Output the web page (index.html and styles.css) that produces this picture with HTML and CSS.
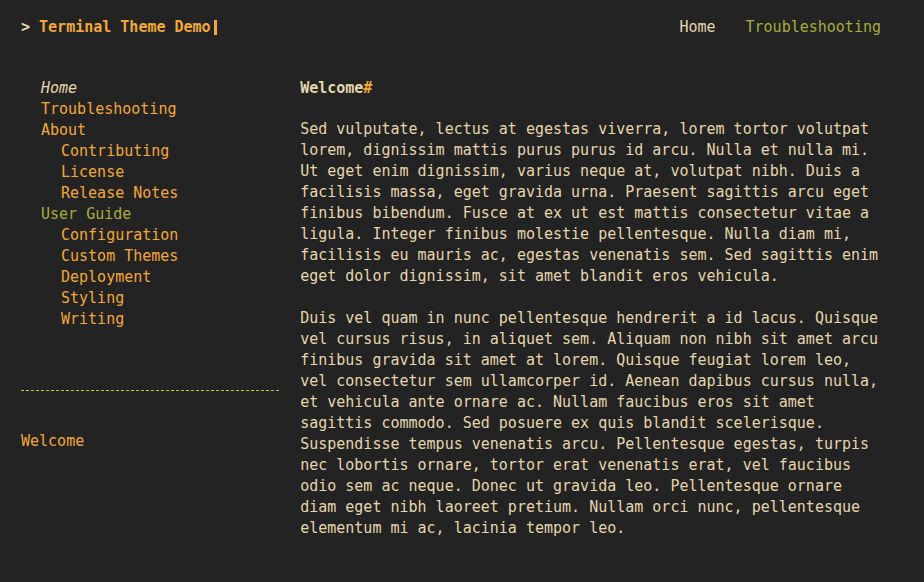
FILE: index.html
```html
<!DOCTYPE html>
<html lang="en">
<head>
<meta charset="utf-8">
<title>Terminal Theme Demo</title>
<link rel="stylesheet" href="styles.css">
</head>
<body>
<div class="container">
  <header class="top-nav">
    <div class="logo"><span class="prompt">&gt; </span><span class="logo-text">Terminal Theme Demo</span><span class="cursor"></span></div>
    <nav class="menu">
      <a class="menu-item menu-home" href="#">Home</a>
      <a class="menu-item menu-active" href="#">Troubleshooting</a>
    </nav>
  </header>
  <div class="main-grid">
    <aside class="sidebar">
      <ul class="side-nav">
        <li class="nav-current">Home</li>
        <li><a href="#">Troubleshooting</a></li>
        <li><a href="#">About</a>
          <ul class="sub-nav">
            <li><a href="#">Contributing</a></li>
            <li><a href="#">License</a></li>
            <li><a href="#">Release Notes</a></li>
          </ul>
        </li>
        <li><span class="nav-section">User Guide</span>
          <ul class="sub-nav">
            <li><a href="#">Configuration</a></li>
            <li><a href="#">Custom Themes</a></li>
            <li><a href="#">Deployment</a></li>
            <li><a href="#">Styling</a></li>
            <li><a href="#">Writing</a></li>
          </ul>
        </li>
      </ul>
      <hr class="divider">
      <ul class="toc">
        <li><a href="#">Welcome</a></li>
      </ul>
    </aside>
    <main class="content">
      <h1 class="title">Welcome<a class="anchor" href="#">#</a></h1>
      <p class="para">Sed vulputate, lectus at egestas viverra, lorem tortor volutpat lorem, dignissim mattis purus purus id arcu. Nulla et nulla mi. Ut eget enim dignissim, varius neque at, volutpat nibh. Duis a facilisis massa, eget gravida urna. Praesent sagittis arcu eget finibus bibendum. Fusce at ex ut est mattis consectetur vitae a ligula. Integer finibus molestie pellentesque. Nulla diam mi, facilisis eu mauris ac, egestas venenatis sem. Sed sagittis enim eget dolor dignissim, sit amet blandit eros vehicula.</p>
      <p class="para">Duis vel quam in nunc pellentesque hendrerit a id lacus. Quisque vel cursus risus, in aliquet sem. Aliquam non nibh sit amet arcu finibus gravida sit amet at lorem. Quisque feugiat lorem leo, vel consectetur sem ullamcorper id. Aenean dapibus cursus nulla, et vehicula ante ornare ac. Nullam faucibus eros sit amet sagittis commodo. Sed posuere ex quis blandit scelerisque. Suspendisse tempus venenatis arcu. Pellentesque egestas, turpis nec lobortis ornare, tortor erat venenatis erat, vel faucibus odio sem ac neque. Donec ut gravida leo. Pellentesque ornare diam eget nibh laoreet pretium. Nullam orci nunc, pellentesque elementum mi ac, lacinia tempor leo.</p>
    </main>
  </div>
</div>
</body>
</html>
```
FILE: styles.css
```css
html, body {
  margin: 0;
  padding: 0;
  background: #232323;
}
body {
  font-family: "DejaVu Sans Mono", "Liberation Mono", monospace;
  font-size: 15px;
  line-height: 21px;
  color: #e6d5ac;
}
a {
  text-decoration: none;
  color: #f2a73a;
}
.container {
  width: 860px;
  padding: 17px 0 0 21px;
}
.top-nav {
  display: flex;
  justify-content: space-between;
  align-items: center;
}
.logo {
  font-weight: bold;
  display: flex;
  align-items: center;
}
.prompt {
  color: #e6d5ac;
  white-space: pre;
}
.logo-text {
  color: #f2a73a;
}
.cursor {
  display: inline-block;
  width: 3px;
  height: 15px;
  margin-left: 3px;
  background: #f2a73a;
}
.menu {
  display: flex;
  gap: 30px;
}
.menu-home {
  color: #e6d5ac;
}
.menu-active {
  color: #a7ab3a;
}
.main-grid {
  display: grid;
  grid-template-columns: 4fr 9fr;
  column-gap: 21px;
  margin-top: 40px;
}
.side-nav, .sub-nav, .toc {
  list-style: none;
  margin: 0;
  padding: 0;
}
.side-nav {
  padding-left: 20px;
}
.sub-nav {
  padding-left: 20px;
}
.nav-current {
  font-style: italic;
  color: #e6d5ac;
}
.nav-section {
  color: #a7ab3a;
}
.divider {
  border: 0;
  border-top: 1px dashed #cfc23a;
  margin: 60px 0 0 0;
  height: 0;
}
.toc {
  margin-top: 40px;
}
.title {
  font-size: 15px;
  line-height: 21px;
  font-weight: bold;
  margin: 0 0 20px 0;
  color: #e6d5ac;
}
.anchor {
  color: #f2a73a;
}
.para {
  margin: 0 0 21px 0;
}
```
